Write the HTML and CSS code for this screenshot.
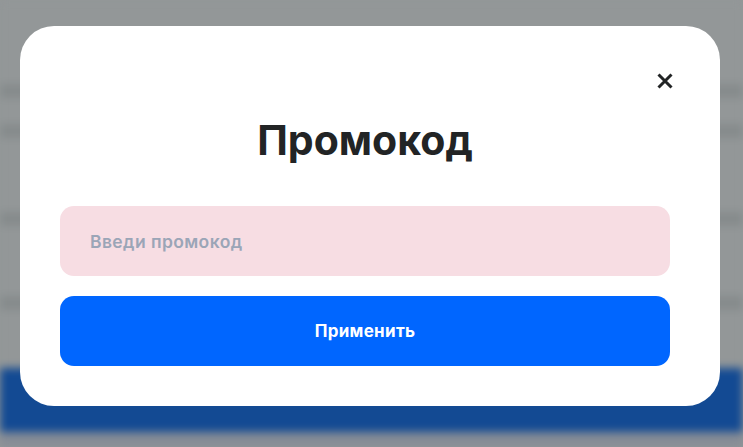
FILE: index.html
```html
<!DOCTYPE html>
<html lang="ru">
<head>
<meta charset="utf-8">
<title>Промокод</title>
<link rel="stylesheet" href="styles.css">
</head>
<body>
<div class="page">
  <div class="page-body">
    <div class="band band-a"></div>
    <div class="band band-b"></div>
    <div class="band band-c"></div>
    <div class="band band-d"></div>
  </div>
  <div class="page-footer"></div>
  <div class="page-bottom"></div>
</div>
<div class="overlay">
  <div class="modal">
    <button class="close" aria-label="Закрыть">
      <svg width="16" height="16" viewBox="0 0 16 16"><path d="M1.5 1.5 L14.5 14.5 M14.5 1.5 L1.5 14.5" stroke="#222425" stroke-width="3" stroke-linecap="butt"/></svg>
    </button>
    <h1 class="title">Промокод</h1>
    <div class="field">Введи промокод</div>
    <button class="apply">Применить</button>
  </div>
</div>
</body>
</html>
```
FILE: styles.css
```css
html, body {
  margin: 0;
  padding: 0;
  width: 743px;
  height: 447px;
  overflow: hidden;
}
body {
  position: relative;
  background: #939798;
  font-family: Inter, "Noto Sans", sans-serif;
}
.page {
  display: flex;
  flex-direction: column;
  height: 447px;
  filter: blur(4px);
}
.page-body {
  flex: none;
  box-sizing: border-box;
  height: 368px;
  display: flex;
  flex-direction: column;
  padding-top: 30px;
  background: #939798;
}
.band {
  flex: none;
  height: 14px;
  background: #868b8c;
}
.band-a { margin-top: 54px; }
.band-b { margin-top: 26px; }
.band-c { margin-top: 74px; }
.band-d { margin-top: 70px; }
.page-footer {
  flex: none;
  height: 64px;
  background: #134a93;
}
.page-bottom {
  flex: 1;
  background: #868c96;
}
.overlay {
  position: absolute;
  inset: 0;
  padding: 26px 0 0 20px;
}
.modal {
  position: relative;
  box-sizing: border-box;
  width: 700px;
  height: 380px;
  background: #ffffff;
  border-radius: 34px;
  padding: 88px 50px 0 40px;
  display: flex;
  flex-direction: column;
}
.close {
  position: absolute;
  top: 47px;
  right: 47px;
  width: 16px;
  height: 16px;
  padding: 0;
  border: 0;
  background: none;
  display: flex;
}
.title {
  margin: 0;
  text-align: center;
  font-size: 41px;
  line-height: 52px;
  font-weight: 700;
  color: #222425;
  letter-spacing: 0;
}
.field {
  margin-top: 40px;
  height: 70px;
  border-radius: 14px;
  background: #f7dde3;
  display: flex;
  align-items: center;
  padding-left: 30px;
  font-size: 17.5px;
  letter-spacing: 0.4px;
  font-weight: 600;
  color: #9ba5b7;
}
.apply {
  margin-top: 20px;
  height: 70px;
  border: 0;
  border-radius: 14px;
  background: #0066ff;
  color: #ffffff;
  font-family: Inter, "Noto Sans", sans-serif;
  font-size: 17px;
  letter-spacing: 0.3px;
  font-weight: 700;
}
```
